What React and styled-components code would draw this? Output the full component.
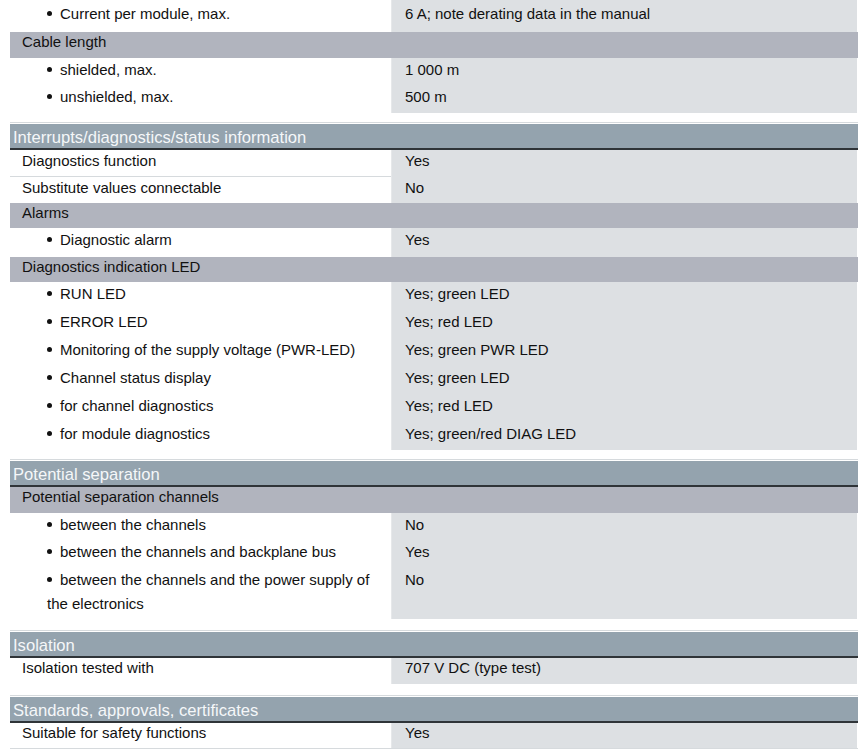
import React from "react";
import styled, { createGlobalStyle } from "styled-components";

const GlobalStyle = createGlobalStyle`
  body {
    margin: 0;
    background: #fff;
    font-family: "Liberation Sans", Arial, sans-serif;
    color: #111;
  }
`;

const Sheet = styled.div`
  width: 848px;
  margin-left: 10px;
  font-size: 15px;
`;

const Section = styled.section`
  margin-top: ${(p) => p.$gap || 0}px;
  border-top: ${(p) => (p.$gap ? "1px solid #d6dadd" : "none")};
  padding-top: ${(p) => (p.$gap ? 1 : 0)}px;
`;

const Heading = styled.h2`
  margin: 0;
  padding: 4px 0 0 3px;
  height: 20px;
  line-height: 20px;
  font-size: 16.6px;
  font-weight: normal;
  color: #f5f7f9;
  background: #94a3ae;
  border-bottom: 2px solid #2f3438;
`;

const SubHeading = styled.div`
  padding: 0 12px 5.5px;
  line-height: 20px;
  background: #b1b4be;
`;

const Row = styled.div`
  display: grid;
  grid-template-columns: 381px 1fr;
  border-bottom: ${(p) => (p.$closed ? "1px solid #d6dadd" : "none")};
`;

const Label = styled.div`
  padding: ${(p) => p.$pt || 0}px 10px ${(p) => p.$pb}px
    ${(p) => (p.$bullet ? 37 : 12)}px;
  line-height: ${(p) => p.$lh}px;
  border-bottom: ${(p) => (p.$divider ? "1px solid #d6dadd" : "none")};
`;

const Dot = styled.span`
  display: inline-block;
  width: 5px;
  height: 5px;
  margin: 0 8px 0 0;
  border-radius: 50%;
  background: #111;
  vertical-align: 3px;
`;

const Value = styled.div`
  margin-right: 1px;
  padding: ${(p) => p.$pt || 0}px 12px 0 13px;
  line-height: ${(p) => p.$lh}px;
  background: #dde0e3;
  border-left: 1px solid #e6e8ea;
`;

const BulletGroup = ({ rows, pb = 3.5, pt = 0 }) =>
  rows.map(([label, value], i) => (
    <Row key={label}>
      <Label $bullet $lh={24} $pt={i === 0 ? pt : 0} $pb={pb}>
        <Dot />
        {label}
      </Label>
      <Value $lh={24} $pt={i === 0 ? pt : 0}>
        {value}
      </Value>
    </Row>
  ));

const PlainRow = ({ label, value, lh = 21, pb = 5, divider, closed }) => (
  <Row $closed={closed}>
    <Label $lh={lh} $pb={pb} $divider={divider}>
      {label}
    </Label>
    <Value $lh={lh}>{value}</Value>
  </Row>
);

export default function App() {
  return (
    <>
      <GlobalStyle />
      <Sheet>
        <Section>
          <BulletGroup
            pt={2}
            pb={6}
            rows={[["Current per module, max.", "6 A; note derating data in the manual"]]}
          />
          <SubHeading>Cable length</SubHeading>
          <BulletGroup
            rows={[
              ["shielded, max.", "1 000 m"],
              ["unshielded, max.", "500 m"],
            ]}
          />
        </Section>

        <Section $gap={9}>
          <Heading>Interrupts/diagnostics/status information</Heading>
          <PlainRow label="Diagnostics function" value="Yes" divider />
          <PlainRow label="Substitute values connectable" value="No" />
          <SubHeading>Alarms</SubHeading>
          <BulletGroup pb={4.5} rows={[["Diagnostic alarm", "Yes"]]} />
          <SubHeading>Diagnostics indication LED</SubHeading>
          <BulletGroup
            pb={4}
            rows={[
              ["RUN LED", "Yes; green LED"],
              ["ERROR LED", "Yes; red LED"],
              ["Monitoring of the supply voltage (PWR-LED)", "Yes; green PWR LED"],
              ["Channel status display", "Yes; green LED"],
              ["for channel diagnostics", "Yes; red LED"],
              ["for module diagnostics", "Yes; green/red DIAG LED"],
            ]}
          />
        </Section>

        <Section $gap={9}>
          <Heading>Potential separation</Heading>
          <SubHeading>Potential separation channels</SubHeading>
          <BulletGroup
            rows={[
              ["between the channels", "No"],
              ["between the channels and backplane bus", "Yes"],
              ["between the channels and the power supply of the electronics", "No"],
            ]}
          />
        </Section>

        <Section $gap={11}>
          <Heading>Isolation</Heading>
          <PlainRow label="Isolation tested with" value="707 V DC (type test)" lh={20} pb={5.5} />
        </Section>

        <Section $gap={11}>
          <Heading>Standards, approvals, certificates</Heading>
          <PlainRow
            label="Suitable for safety functions"
            value="Yes"
            lh={20}
            pb={5}
            closed
          />
        </Section>
      </Sheet>
    </>
  );
}
